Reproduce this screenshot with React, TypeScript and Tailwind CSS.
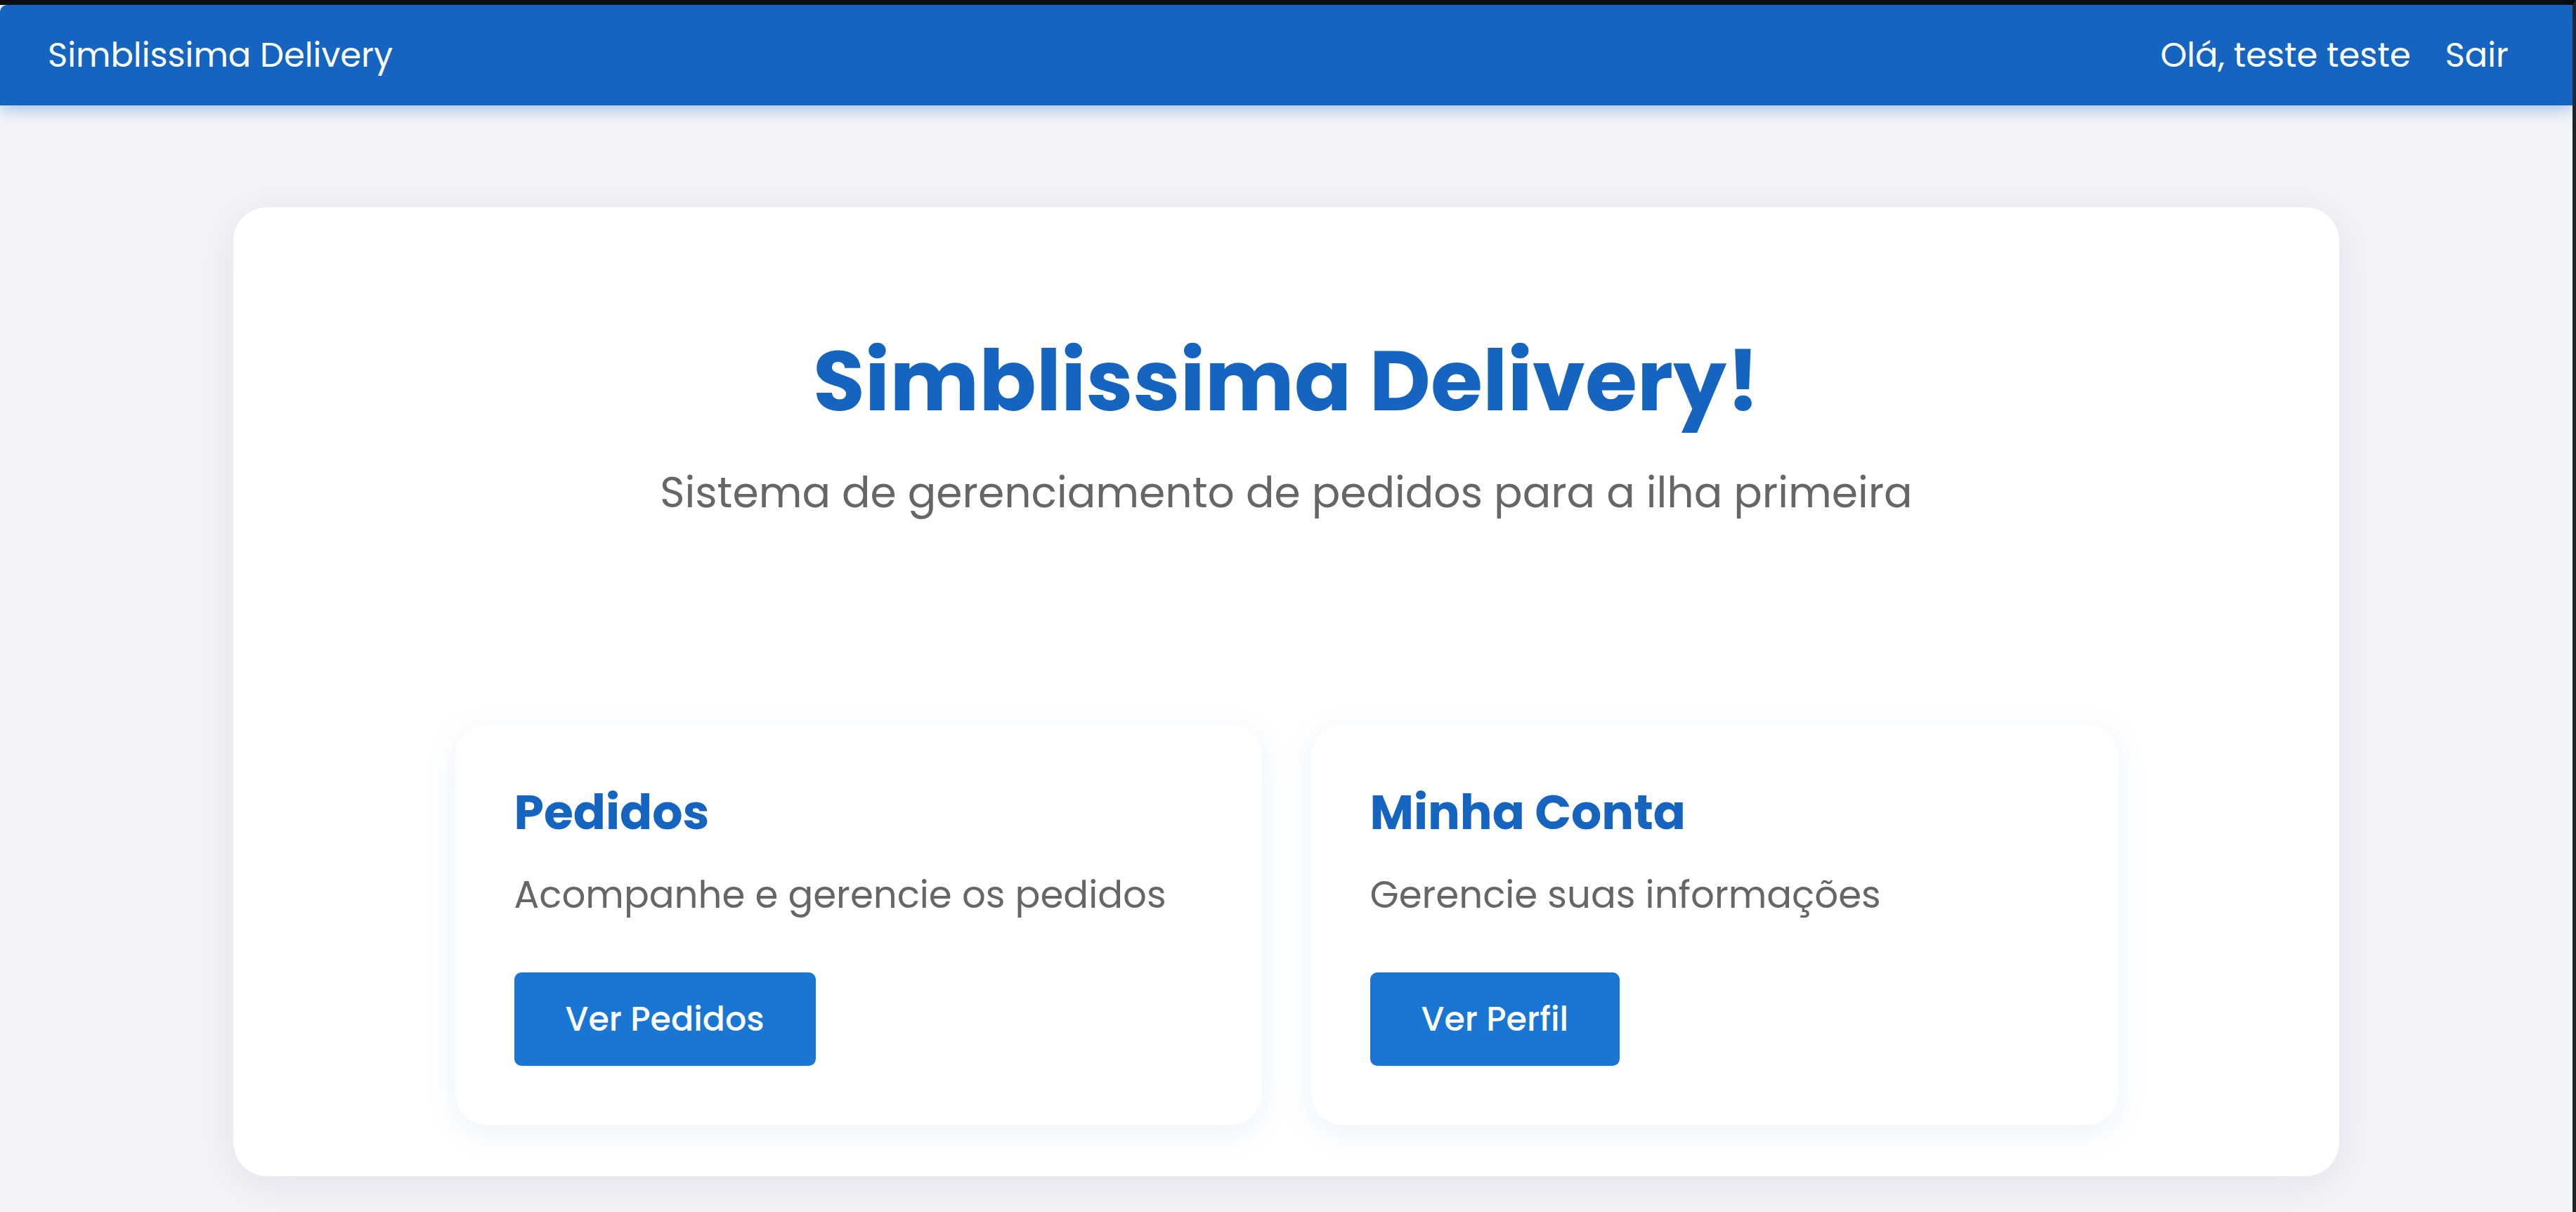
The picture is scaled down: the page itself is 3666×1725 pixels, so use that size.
const font = { fontFamily: "Poppins, Inter, 'Noto Sans', sans-serif" };

function FeatureCard({ title, text, action }: { title: string; text: string; action: string }) {
  return (
    <div className="bg-white rounded-[44px] shadow-[0_10px_44px_rgba(25,118,210,0.09)] px-[84px] pt-[85px] pb-[84px] flex flex-col items-start">
      <h2 className="text-[68px] leading-[82px] font-bold text-[#1565c0]">{title}</h2>
      <p className="mt-[37px] text-[53px] leading-[78px] text-[#666666]">{text}</p>
      <button className="mt-[71px] h-[133px] px-[73px] rounded-[10px] bg-[#1976d2] text-white text-[47.5px] font-medium">
        {action}
      </button>
    </div>
  );
}

export default function App() {
  return (
    <div className="min-h-screen bg-[#f3f4f9] border-t-[7px] border-t-[#0a0a0a] border-r-[5px] border-r-[#1f2227]" style={font}>
      <header className="h-[143px] bg-[#1565c0] rounded-tl-[10px] flex items-center justify-between pl-[68px] pr-[91px] text-white shadow-[0_6px_22px_rgba(21,101,192,0.35)] relative z-10">
        <span className="text-[48px]">Simblissima Delivery</span>
        <nav className="flex items-center gap-[49px] text-[48px]">
          <span>Olá, teste teste</span>
          <button>Sair</button>
        </nav>
      </header>

      <main className="flex justify-center pt-[145px]">
        <section className="w-[2997px] bg-white rounded-[48px] shadow-[0_10px_60px_rgba(20,30,70,0.08)] pt-[174px] pb-[73px] flex flex-col items-center">
          <h1 className="text-[120px] leading-[146px] font-bold text-[#1565c0]">Simblissima Delivery!</h1>
          <p className="mt-[42px] text-[60px] leading-[88px] text-[#666666]">
            Sistema de gerenciamento de pedidos para a ilha primeira
          </p>

          <div className="mt-[286px] w-[2366px] grid grid-cols-2 gap-[70px]">
            <FeatureCard title="Pedidos" text="Acompanhe e gerencie os pedidos" action="Ver Pedidos" />
            <FeatureCard title="Minha Conta" text="Gerencie suas informações" action="Ver Perfil" />
          </div>
        </section>
      </main>
    </div>
  );
}
